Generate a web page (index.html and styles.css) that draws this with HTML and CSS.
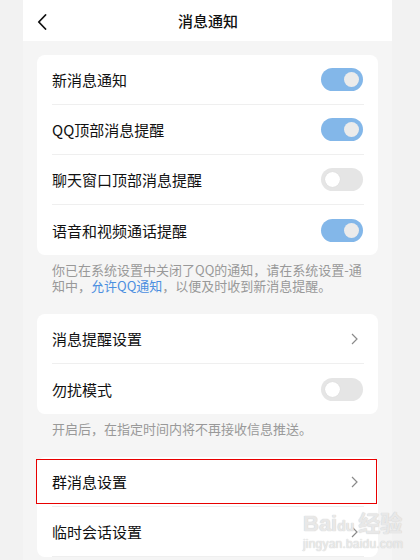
FILE: index.html
```html
<!DOCTYPE html>
<html lang="zh-CN">
<head>
<meta charset="utf-8">
<title>消息通知</title>
<link rel="stylesheet" href="styles.css">
</head>
<body>
<div class="page">
  <header class="header">
    <svg class="back" width="10" height="16" viewBox="0 0 10 16"><path d="M8.5 1 L1.8 8 L8.5 15" fill="none" stroke="#111" stroke-width="1.8" stroke-linecap="round" stroke-linejoin="round"/></svg>
    <div class="title">消息通知</div>
  </header>
  <main class="content">
    <section class="card">
      <div class="row"><span>新消息通知</span><span class="toggle on"></span></div>
      <div class="row"><span>QQ顶部消息提醒</span><span class="toggle on"></span></div>
      <div class="row"><span>聊天窗口顶部消息提醒</span><span class="toggle"></span></div>
      <div class="row"><span>语音和视频通话提醒</span><span class="toggle on"></span></div>
    </section>
    <div class="note">
      <div class="line">你已在系统设置中关闭了QQ的通知，请在系统设置-通</div>
      <div class="line"><span>知中，</span><span class="link">允许QQ通知</span><span>，以便及时收到新消息提醒。</span></div>
    </div>
    <section class="card">
      <div class="row"><span>消息提醒设置</span><svg class="chev" width="7" height="12" viewBox="0 0 7 12"><path d="M1 1 L6 6 L1 11" fill="none" stroke="#8a8a8a" stroke-width="1.2"/></svg></div>
      <div class="row"><span>勿扰模式</span><span class="toggle"></span></div>
    </section>
    <div class="note"><div class="line">开启后，在指定时间内将不再接收信息推送。</div></div>
    <section class="card card-last">
      <div class="row"><span>群消息设置</span><svg class="chev" width="7" height="12" viewBox="0 0 7 12"><path d="M1 1 L6 6 L1 11" fill="none" stroke="#8a8a8a" stroke-width="1.2"/></svg></div>
      <div class="row"><span>临时会话设置</span><svg class="chev" width="7" height="12" viewBox="0 0 7 12"><path d="M1 1 L6 6 L1 11" fill="none" stroke="#8a8a8a" stroke-width="1.2"/></svg></div>
      <div class="highlight"></div>
    </section>
  </main>
  <div class="watermark">
    <div class="wm-top">Bai<span class="wm-du">du</span>经验</div>
    <div class="wm-url">jingyan.baidu.com</div>
  </div>
</div>
</body>
</html>
```
FILE: styles.css
```css
html, body {
  margin: 0;
  padding: 0;
}
body {
  background: #f2f2f2;
  font-family: "Noto Sans CJK SC", "Noto Sans", sans-serif;
  color: #111;
  height: 560px;
  overflow: hidden;
}
.page {
  position: relative;
  width: 369px;
  margin-left: 23px;
  background: #f5f5f5;
  min-height: 560px;
}
.header {
  position: relative;
  height: 41px;
  background: #fff;
  display: flex;
  align-items: center;
  justify-content: center;
}
.back {
  position: absolute;
  left: 14px;
  top: 14px;
}
.title {
  font-size: 15px;
  font-weight: 500;
  line-height: 1;
  margin-left: 1px;
}
.content {
  padding: 14px 14px 0 14px;
}
.card {
  background: #fff;
  border-radius: 8px;
  padding: 0 14px 0 15px;
}
.row {
  height: 50px;
  display: flex;
  align-items: center;
  justify-content: space-between;
  font-size: 15px;
  border-bottom: 1px solid #efefef;
  box-sizing: border-box;
}
.row:last-of-type {
  border-bottom: none;
}
.toggle {
  position: relative;
  width: 42px;
  height: 23px;
  border-radius: 12px;
  background: #e5e5e5;
  margin-right: 1px;
}
.toggle::after {
  content: "";
  position: absolute;
  top: 4px;
  left: 4px;
  width: 15px;
  height: 15px;
  border-radius: 50%;
  background: #fff;
  box-shadow: 0 0 1px rgba(0,0,0,0.12);
}
.toggle.on {
  background: #83b7e9;
}
.toggle.on::after {
  left: auto;
  right: 4px;
  background: #ebebeb;
  box-shadow: none;
}
.chev {
  margin-right: 6px;
}
.note {
  margin: 7px 0 20px 0;
  padding: 0 14px 0 15px;
  font-size: 13px;
  line-height: 16px;
  color: #999;
}
.line {
  white-space: nowrap;
}
.link {
  color: #4c8fe0;
}
.card-last {
  position: relative;
}
.highlight {
  position: absolute;
  left: -1px;
  top: 2px;
  width: 341px;
  height: 45px;
  box-sizing: border-box;
  border: 1.5px solid #e80000;
}
.watermark {
  position: absolute;
  left: 280px;
  top: 512px;
  color: rgba(255,255,255,0.55);
  font-family: "Liberation Sans", "Noto Sans CJK SC", sans-serif;
  text-shadow: 0 0 1px #cfcfcf, 0 0 1px #cfcfcf;
}
.wm-top {
  font-size: 22px;
  font-weight: bold;
  line-height: 24px;
}
.wm-du {
  font-size: 14px;
  margin-right: 4px;
}
.wm-url {
  font-size: 12px;
  line-height: 13px;
  letter-spacing: 0.2px;
}
```
